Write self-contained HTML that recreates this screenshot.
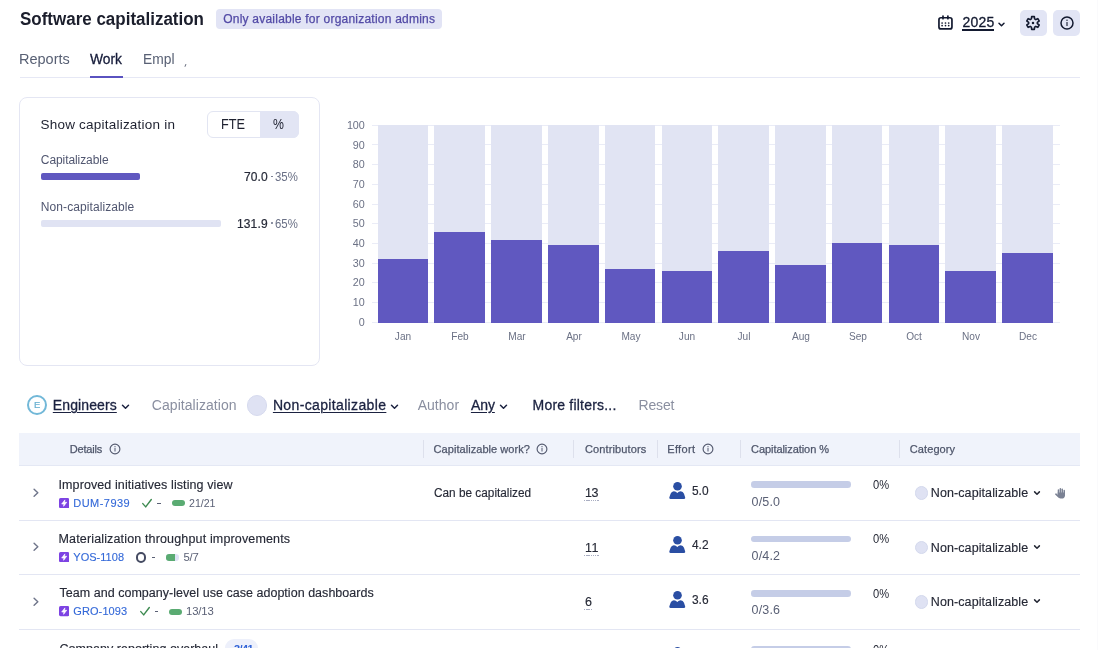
<!DOCTYPE html>
<html><head><meta charset="utf-8"><style>
html,body{margin:0;padding:0;background:#fff;width:1100px;height:650px;overflow:hidden;position:relative}
.wrap{position:absolute;left:0;top:0;width:1100px;height:650px;will-change:transform}
body{font-family:"Liberation Sans", sans-serif}
.t{position:absolute;white-space:nowrap;line-height:1}
.r{position:absolute}
</style></head><body><div class="wrap">
<div class="t " style="left:20.00px;top:10.00px;font-size:18px;color:#1b1e2c;font-weight:700;letter-spacing:0px;;transform:scaleX(0.9431);transform-origin:0 0">Software capitalization</div>
<div class="r" style="left:216.00px;top:9.00px;width:226.00px;height:20.00px;background:#e2e4f5;border-radius:4px"></div>
<div class="t " style="left:223.20px;top:13.20px;font-size:12px;color:#524aa6;font-weight:400;letter-spacing:0.226px;-webkit-text-stroke:0.25px #524aa6;">Only available for organization admins</div>
<svg class="r" style="left:937px;top:14px" width="17" height="17" viewBox="0 0 17 17">
<rect x="1.95" y="3.75" width="13" height="11.2" rx="2" fill="none" stroke="#131a30" stroke-width="1.7"/>
<rect x="5.15" y="1.2" width="1.7" height="4.4" rx=".85" fill="#131a30"/><rect x="10.05" y="1.2" width="1.7" height="4.4" rx=".85" fill="#131a30"/>
<g fill="#131a30"><circle cx="5.1" cy="9" r=".85"/><circle cx="8.5" cy="9" r=".85"/><circle cx="11.7" cy="9" r=".85"/>
<circle cx="5.1" cy="11.6" r=".85"/><circle cx="8.5" cy="11.6" r=".85"/><circle cx="11.7" cy="11.6" r=".85"/></g></svg>
<div class="t " style="left:962.40px;top:15.00px;font-size:14px;color:#131a30;font-weight:400;letter-spacing:0.214px;-webkit-text-stroke:0.3px #131a30;">2025</div>
<div class="r" style="left:962.40px;top:29.30px;width:32.00px;height:1.80px;background:#131a30;"></div>
<svg class="r" style="left:997px;top:21px" width="9" height="7" viewBox="0 0 9 7"><path d="M2 2.2 L4.5 4.7 L7 2.2" fill="none" stroke="#131a30" stroke-width="1.5" stroke-linecap="round" stroke-linejoin="round"/></svg>
<div class="r" style="left:1020.00px;top:9.50px;width:26.50px;height:26.40px;background:#e2e5f5;border-radius:5px"></div>
<div class="r" style="left:1053.20px;top:9.50px;width:26.50px;height:26.40px;background:#e2e5f5;border-radius:5px"></div>
<svg class="r" style="left:1025.4px;top:14.6px" width="16" height="16" viewBox="0 0 16 16"><path fill="none" stroke="#131a30" stroke-width="1.6" stroke-linejoin="round" d="M6.65 1.64 L9.35 1.64 L9.58 3.89 L10.77 4.58 L12.83 3.65 L14.18 5.99 L12.35 7.31 L12.35 8.69 L14.18 10.01 L12.83 12.35 L10.77 11.42 L9.58 12.11 L9.35 14.36 L6.65 14.36 L6.42 12.11 L5.23 11.42 L3.17 12.35 L1.82 10.01 L3.65 8.69 L3.65 7.31 L1.82 5.99 L3.17 3.65 L5.23 4.58 L6.42 3.89 Z"/><circle cx="8" cy="8" r="1.25" fill="#131a30"/></svg>
<svg class="r" style="left:1058.6px;top:14.6px" width="16" height="16" viewBox="0 0 16 16"><circle cx="8" cy="8" r="6" fill="none" stroke="#131a30" stroke-width="1.5"/><rect x="7.45" y="7.1" width="1.1" height="4" rx=".4" fill="#131a30"/><circle cx="8" cy="5.2" r=".7" fill="#131a30"/></svg>
<div class="t " style="left:19.00px;top:52.10px;font-size:14.5px;color:#586074;font-weight:400;letter-spacing:-0.004px;">Reports</div>
<div class="t " style="left:89.90px;top:52.10px;font-size:14.5px;color:#161c3a;font-weight:400;letter-spacing:0px;-webkit-text-stroke:0.3px #161c3a;;transform:scaleX(0.9529);transform-origin:0 0">Work</div>
<div class="t " style="left:142.65px;top:52.10px;font-size:14.5px;color:#586074;font-weight:400;letter-spacing:0px;;transform:scaleX(0.9524);transform-origin:0 0">Empl</div>
<div class="r" style="left:184.60px;top:64.20px;width:1.10px;height:2.60px;background:#6a7080;border-radius:.5px;transform:rotate(25deg)"></div>
<div class="r" style="left:20.00px;top:77.00px;width:1060.00px;height:1.00px;background:#e6e8f5;"></div>
<div class="r" style="left:89.90px;top:76.00px;width:33.10px;height:2.40px;background:#5a52c0;"></div>
<div class="r" style="left:19.00px;top:97.00px;width:301.00px;height:269.00px;background:#fff;border:1px solid #e4e6f3;border-radius:8px;box-sizing:border-box"></div>
<div class="t " style="left:40.50px;top:117.70px;font-size:13.5px;color:#1e2130;font-weight:400;letter-spacing:0.218px;">Show capitalization in</div>
<div class="r" style="left:206.50px;top:111.20px;width:92.50px;height:26.50px;background:#fff;border:1px solid #e2e5f2;border-radius:6px;box-sizing:border-box"></div>
<div class="r" style="left:259.50px;top:111.20px;width:39.50px;height:26.50px;background:#e2e5f4;border-radius:0 6px 6px 0"></div>
<div class="t " style="left:220.62px;top:117.20px;font-size:14.5px;color:#1e2130;font-weight:400;letter-spacing:0px;;transform:scaleX(0.8797);transform-origin:0 0">FTE</div>
<div class="t " style="left:273.00px;top:117.20px;font-size:14.5px;color:#1e2130;font-weight:400;letter-spacing:0px;;transform:scaleX(0.8462);transform-origin:0 0">%</div>
<div class="t " style="left:40.80px;top:154.00px;font-size:12px;color:#505670;font-weight:400;letter-spacing:-0.078px;">Capitalizable</div>
<div class="r" style="left:40.80px;top:172.50px;width:99.20px;height:7.50px;background:#6058c0;border-radius:2px"></div>
<div class="t " style="left:244.00px;top:170.60px;font-size:12px;color:#262a38;font-weight:400;letter-spacing:0.073px;-webkit-text-stroke:0.2px #262a38;">70.0</div>
<div class="r" style="left:270.90px;top:175.70px;width:1.80px;height:1.80px;background:#6a7086;border-radius:50%"></div>
<div class="t " style="left:275.30px;top:170.60px;font-size:12px;color:#6a7086;font-weight:400;letter-spacing:0px;;transform:scaleX(0.9488);transform-origin:0 0">35%</div>
<div class="t " style="left:40.80px;top:200.70px;font-size:12px;color:#505670;font-weight:400;letter-spacing:0.089px;">Non-capitalizable</div>
<div class="r" style="left:40.80px;top:219.60px;width:180.40px;height:7.20px;background:#e0e3f3;border-radius:2px"></div>
<div class="t " style="left:237.00px;top:217.50px;font-size:12px;color:#262a38;font-weight:400;letter-spacing:0.136px;-webkit-text-stroke:0.2px #262a38;">131.9</div>
<div class="r" style="left:270.90px;top:222.30px;width:1.80px;height:1.80px;background:#6a7086;border-radius:50%"></div>
<div class="t " style="left:275.30px;top:217.50px;font-size:12px;color:#6a7086;font-weight:400;letter-spacing:0px;;transform:scaleX(0.9488);transform-origin:0 0">65%</div>
<div class="r" style="left:371.80px;top:321.80px;width:688.20px;height:1.00px;background:#eaecf7;"></div>
<div class="t" style="right:735.20px;top:316.90px;font-size:10.75px;color:#6b7185">0</div>
<div class="r" style="left:371.80px;top:302.09px;width:688.20px;height:1.00px;background:#eaecf7;"></div>
<div class="t" style="right:735.20px;top:297.19px;font-size:10.75px;color:#6b7185">10</div>
<div class="r" style="left:371.80px;top:282.38px;width:688.20px;height:1.00px;background:#eaecf7;"></div>
<div class="t" style="right:735.20px;top:277.48px;font-size:10.75px;color:#6b7185">20</div>
<div class="r" style="left:371.80px;top:262.67px;width:688.20px;height:1.00px;background:#eaecf7;"></div>
<div class="t" style="right:735.20px;top:257.77px;font-size:10.75px;color:#6b7185">30</div>
<div class="r" style="left:371.80px;top:242.96px;width:688.20px;height:1.00px;background:#eaecf7;"></div>
<div class="t" style="right:735.20px;top:238.06px;font-size:10.75px;color:#6b7185">40</div>
<div class="r" style="left:371.80px;top:223.25px;width:688.20px;height:1.00px;background:#eaecf7;"></div>
<div class="t" style="right:735.20px;top:218.35px;font-size:10.75px;color:#6b7185">50</div>
<div class="r" style="left:371.80px;top:203.54px;width:688.20px;height:1.00px;background:#eaecf7;"></div>
<div class="t" style="right:735.20px;top:198.64px;font-size:10.75px;color:#6b7185">60</div>
<div class="r" style="left:371.80px;top:183.83px;width:688.20px;height:1.00px;background:#eaecf7;"></div>
<div class="t" style="right:735.20px;top:178.93px;font-size:10.75px;color:#6b7185">70</div>
<div class="r" style="left:371.80px;top:164.12px;width:688.20px;height:1.00px;background:#eaecf7;"></div>
<div class="t" style="right:735.20px;top:159.22px;font-size:10.75px;color:#6b7185">80</div>
<div class="r" style="left:371.80px;top:144.41px;width:688.20px;height:1.00px;background:#eaecf7;"></div>
<div class="t" style="right:735.20px;top:139.51px;font-size:10.75px;color:#6b7185">90</div>
<div class="r" style="left:371.80px;top:124.70px;width:688.20px;height:1.00px;background:#eaecf7;"></div>
<div class="t" style="right:735.20px;top:119.80px;font-size:10.75px;color:#6b7185">100</div>
<div class="r" style="left:377.70px;top:125.20px;width:50.50px;height:197.60px;background:#e1e4f3;"></div>
<div class="r" style="left:377.70px;top:259.23px;width:50.50px;height:63.57px;background:#6058c0;"></div>
<div class="t" style="left:373.45px;width:60px;text-align:center;top:330.80px;font-size:10.75px;color:#6b7185;transform:scaleX(0.94)">Jan</div>
<div class="r" style="left:434.47px;top:125.20px;width:50.50px;height:197.60px;background:#e1e4f3;"></div>
<div class="r" style="left:434.47px;top:231.63px;width:50.50px;height:91.17px;background:#6058c0;"></div>
<div class="t" style="left:430.22px;width:60px;text-align:center;top:330.80px;font-size:10.75px;color:#6b7185;transform:scaleX(0.94)">Feb</div>
<div class="r" style="left:491.24px;top:125.20px;width:50.50px;height:197.60px;background:#e1e4f3;"></div>
<div class="r" style="left:491.24px;top:239.52px;width:50.50px;height:83.28px;background:#6058c0;"></div>
<div class="t" style="left:486.99px;width:60px;text-align:center;top:330.80px;font-size:10.75px;color:#6b7185;transform:scaleX(0.94)">Mar</div>
<div class="r" style="left:548.01px;top:125.20px;width:50.50px;height:197.60px;background:#e1e4f3;"></div>
<div class="r" style="left:548.01px;top:245.43px;width:50.50px;height:77.37px;background:#6058c0;"></div>
<div class="t" style="left:543.76px;width:60px;text-align:center;top:330.80px;font-size:10.75px;color:#6b7185;transform:scaleX(0.94)">Apr</div>
<div class="r" style="left:604.78px;top:125.20px;width:50.50px;height:197.60px;background:#e1e4f3;"></div>
<div class="r" style="left:604.78px;top:269.08px;width:50.50px;height:53.72px;background:#6058c0;"></div>
<div class="t" style="left:600.53px;width:60px;text-align:center;top:330.80px;font-size:10.75px;color:#6b7185;transform:scaleX(0.94)">May</div>
<div class="r" style="left:661.55px;top:125.20px;width:50.50px;height:197.60px;background:#e1e4f3;"></div>
<div class="r" style="left:661.55px;top:271.05px;width:50.50px;height:51.75px;background:#6058c0;"></div>
<div class="t" style="left:657.30px;width:60px;text-align:center;top:330.80px;font-size:10.75px;color:#6b7185;transform:scaleX(0.94)">Jun</div>
<div class="r" style="left:718.32px;top:125.20px;width:50.50px;height:197.60px;background:#e1e4f3;"></div>
<div class="r" style="left:718.32px;top:251.34px;width:50.50px;height:71.46px;background:#6058c0;"></div>
<div class="t" style="left:714.07px;width:60px;text-align:center;top:330.80px;font-size:10.75px;color:#6b7185;transform:scaleX(0.94)">Jul</div>
<div class="r" style="left:775.09px;top:125.20px;width:50.50px;height:197.60px;background:#e1e4f3;"></div>
<div class="r" style="left:775.09px;top:265.14px;width:50.50px;height:57.66px;background:#6058c0;"></div>
<div class="t" style="left:770.84px;width:60px;text-align:center;top:330.80px;font-size:10.75px;color:#6b7185;transform:scaleX(0.94)">Aug</div>
<div class="r" style="left:831.86px;top:125.20px;width:50.50px;height:197.60px;background:#e1e4f3;"></div>
<div class="r" style="left:831.86px;top:243.46px;width:50.50px;height:79.34px;background:#6058c0;"></div>
<div class="t" style="left:827.61px;width:60px;text-align:center;top:330.80px;font-size:10.75px;color:#6b7185;transform:scaleX(0.94)">Sep</div>
<div class="r" style="left:888.63px;top:125.20px;width:50.50px;height:197.60px;background:#e1e4f3;"></div>
<div class="r" style="left:888.63px;top:245.43px;width:50.50px;height:77.37px;background:#6058c0;"></div>
<div class="t" style="left:884.38px;width:60px;text-align:center;top:330.80px;font-size:10.75px;color:#6b7185;transform:scaleX(0.94)">Oct</div>
<div class="r" style="left:945.40px;top:125.20px;width:50.50px;height:197.60px;background:#e1e4f3;"></div>
<div class="r" style="left:945.40px;top:271.05px;width:50.50px;height:51.75px;background:#6058c0;"></div>
<div class="t" style="left:941.15px;width:60px;text-align:center;top:330.80px;font-size:10.75px;color:#6b7185;transform:scaleX(0.94)">Nov</div>
<div class="r" style="left:1002.17px;top:125.20px;width:50.50px;height:197.60px;background:#e1e4f3;"></div>
<div class="r" style="left:1002.17px;top:253.31px;width:50.50px;height:69.48px;background:#6058c0;"></div>
<div class="t" style="left:997.92px;width:60px;text-align:center;top:330.80px;font-size:10.75px;color:#6b7185;transform:scaleX(0.94)">Dec</div>
<div class="r" style="left:26.8px;top:395.3px;width:19.8px;height:19.8px;border:2px solid #72b8d8;border-radius:50%;box-sizing:border-box"></div>
<div class="t " style="left:33.90px;top:400.40px;font-size:9.5px;color:#68b0d0;font-weight:400;letter-spacing:0px;-webkit-text-stroke:0.2px #68b0d0;">E</div>
<div class="t " style="left:52.80px;top:397.70px;font-size:14px;color:#1b2240;font-weight:400;letter-spacing:0.107px;-webkit-text-stroke:0.3px #1b2240;text-decoration:underline;text-decoration-thickness:1.4px;text-underline-offset:1.6px">Engineers</div>
<svg class="r" style="left:120.8px;top:403px" width="9" height="7" viewBox="0 0 9 7"><path d="M1.5 2.2 L4.5 5.2 L7.5 2.2" fill="none" stroke="#1b2240" stroke-width="1.5" stroke-linecap="round" stroke-linejoin="round"/></svg>
<div class="t " style="left:151.80px;top:397.70px;font-size:14px;color:#8a8fa0;font-weight:400;letter-spacing:0.057px;">Capitalization</div>
<div class="r" style="left:246.9px;top:395.3px;width:20.3px;height:20.3px;background:#dfe2f3;border:1px solid #d6daee;border-radius:50%;box-sizing:border-box"></div>
<div class="t " style="left:272.90px;top:397.70px;font-size:14px;color:#1b2240;font-weight:400;letter-spacing:0.356px;-webkit-text-stroke:0.3px #1b2240;text-decoration:underline;text-decoration-thickness:1.4px;text-underline-offset:1.6px">Non-capitalizable</div>
<svg class="r" style="left:390.3px;top:403px" width="9" height="7" viewBox="0 0 9 7"><path d="M1.5 2.2 L4.5 5.2 L7.5 2.2" fill="none" stroke="#1b2240" stroke-width="1.5" stroke-linecap="round" stroke-linejoin="round"/></svg>
<div class="t " style="left:417.70px;top:397.70px;font-size:14px;color:#8a8fa0;font-weight:400;letter-spacing:0.023px;">Author</div>
<div class="t " style="left:470.90px;top:397.70px;font-size:14px;color:#1b2240;font-weight:400;letter-spacing:-0.062px;-webkit-text-stroke:0.3px #1b2240;text-decoration:underline;text-decoration-thickness:1.4px;text-underline-offset:1.6px">Any</div>
<svg class="r" style="left:499px;top:403px" width="9" height="7" viewBox="0 0 9 7"><path d="M1.5 2.2 L4.5 5.2 L7.5 2.2" fill="none" stroke="#1b2240" stroke-width="1.5" stroke-linecap="round" stroke-linejoin="round"/></svg>
<div class="t " style="left:532.60px;top:397.70px;font-size:14px;color:#1b2240;font-weight:400;letter-spacing:0.199px;-webkit-text-stroke:0.3px #1b2240;">More filters...</div>
<div class="t " style="left:638.40px;top:397.70px;font-size:14px;color:#8a8fa0;font-weight:400;letter-spacing:-0.121px;">Reset</div>
<div class="r" style="left:19.20px;top:433.00px;width:1060.60px;height:33.00px;background:#f0f3fb;border-bottom:1px solid #e4e8f4;box-sizing:border-box"></div>
<div class="t " style="left:69.70px;top:444.40px;font-size:11px;color:#4f566b;font-weight:400;letter-spacing:-0.171px;-webkit-text-stroke:0.25px #4f566b;">Details</div>
<svg class="r" style="left:109.20px;top:442.80px" width="12" height="12" viewBox="0 0 12 12"><circle cx="6" cy="6" r="4.9" fill="none" stroke="#555b70" stroke-width="1.15"/><rect x="5.5" y="5.1" width="1" height="3.5" rx=".3" fill="#555b70"/><circle cx="6" cy="3.7" r=".62" fill="#555b70"/></svg>
<div class="r" style="left:423.00px;top:440.00px;width:1.00px;height:18.40px;background:#dde0ec;"></div>
<div class="r" style="left:573.40px;top:440.00px;width:1.00px;height:18.40px;background:#dde0ec;"></div>
<div class="r" style="left:657.00px;top:440.00px;width:1.00px;height:18.40px;background:#dde0ec;"></div>
<div class="r" style="left:740.00px;top:440.00px;width:1.00px;height:18.40px;background:#dde0ec;"></div>
<div class="r" style="left:898.80px;top:440.00px;width:1.00px;height:18.40px;background:#dde0ec;"></div>
<div class="t " style="left:433.60px;top:444.40px;font-size:11px;color:#4f566b;font-weight:400;letter-spacing:0.052px;-webkit-text-stroke:0.25px #4f566b;">Capitalizable work?</div>
<svg class="r" style="left:536.00px;top:442.80px" width="12" height="12" viewBox="0 0 12 12"><circle cx="6" cy="6" r="4.9" fill="none" stroke="#555b70" stroke-width="1.15"/><rect x="5.5" y="5.1" width="1" height="3.5" rx=".3" fill="#555b70"/><circle cx="6" cy="3.7" r=".62" fill="#555b70"/></svg>
<div class="t " style="left:585.00px;top:444.40px;font-size:11px;color:#4f566b;font-weight:400;letter-spacing:0.126px;-webkit-text-stroke:0.25px #4f566b;">Contributors</div>
<div class="t " style="left:667.20px;top:444.40px;font-size:11px;color:#4f566b;font-weight:400;letter-spacing:0.354px;-webkit-text-stroke:0.25px #4f566b;">Effort</div>
<svg class="r" style="left:701.70px;top:442.80px" width="12" height="12" viewBox="0 0 12 12"><circle cx="6" cy="6" r="4.9" fill="none" stroke="#555b70" stroke-width="1.15"/><rect x="5.5" y="5.1" width="1" height="3.5" rx=".3" fill="#555b70"/><circle cx="6" cy="3.7" r=".62" fill="#555b70"/></svg>
<div class="t " style="left:751.00px;top:444.40px;font-size:11px;color:#4f566b;font-weight:400;letter-spacing:-0.06px;-webkit-text-stroke:0.25px #4f566b;">Capitalization %</div>
<div class="t " style="left:909.80px;top:444.40px;font-size:11px;color:#4f566b;font-weight:400;letter-spacing:0.095px;-webkit-text-stroke:0.25px #4f566b;">Category</div>
<div class="r" style="left:0;top:466px;width:1100px;height:182px;overflow:hidden">
<div class="r" style="left:19.20px;top:53.90px;width:1060.60px;height:1.00px;background:#e3e6f3;"></div>
<svg class="r" style="left:30px;top:19.00px" width="12" height="15" viewBox="0 0 12 15"><path d="M4.1 4.3 L7.8 7.8 L4.1 11.2" fill="none" stroke="#6f758a" stroke-width="1.45" stroke-linecap="round" stroke-linejoin="round"/></svg>
<div class="t " style="left:58.50px;top:12.60px;font-size:12.5px;color:#262936;font-weight:400;letter-spacing:0.098px;-webkit-text-stroke:0.15px #262936;">Improved initiatives listing view</div>
<svg class="r" style="left:59.1px;top:31.60px" width="10.4" height="10.2" viewBox="0 0 10.4 10.2"><rect width="10.4" height="10.2" rx="1.6" fill="#7d43e3"/><path d="M5.9 1.9 L2.7 6.0 H5.0 L4.6 8.3 L7.7 4.3 H5.4 Z" fill="#fff" stroke="#fff" stroke-width=".7" stroke-linejoin="round"/></svg>
<div class="t " style="left:73.30px;top:31.50px;font-size:11px;color:#3368d8;font-weight:400;letter-spacing:0.462px;-webkit-text-stroke:0.12px #3368d8;">DUM-7939</div>
<svg class="r" style="left:141.90px;top:31.50px" width="10.5" height="10.5" viewBox="0 0 10.5 10.5"><path d="M0.8 5.6 L3.7 8.9 L9.3 1.5" fill="none" stroke="#3d8a50" stroke-width="1.4" stroke-linecap="round" stroke-linejoin="round"/></svg>
<div class="r" style="left:157.40px;top:37.00px;width:3.40px;height:1.20px;background:#5a6075;"></div>
<div class="r" style="left:171.70px;top:34.00px;width:13.2px;height:6.4px;border-radius:3.2px;background:#dde2f5;overflow:hidden"><div style="width:13.20px;height:100%;background:#5aab72"></div></div>
<div class="t " style="left:188.90px;top:31.50px;font-size:11.3px;color:#5a6075;font-weight:400;letter-spacing:0px;;transform:scaleX(0.9361);transform-origin:0 0">21/21</div>
<div class="t " style="left:434.00px;top:21.00px;font-size:12.5px;color:#262936;font-weight:400;letter-spacing:0px;-webkit-text-stroke:0.15px #262936;;transform:scaleX(0.9447);transform-origin:0 0">Can be capitalized</div>
<div class="t " style="left:585.00px;top:21.10px;font-size:12.5px;color:#262936;font-weight:400;letter-spacing:-0.552px;-webkit-text-stroke:0.15px #262936;">13</div>
<div class="r" style="left:583.60px;top:34.00px;width:15.60px;height:1.00px;background:repeating-linear-gradient(90deg,#a9aec2 0 1.5px,transparent 1.5px 2.2px);"></div>
<svg class="r" style="left:669px;top:16.00px" width="17" height="17" viewBox="0 0 17 17"><circle cx="8.5" cy="4.3" r="4.3" fill="#2a4ea3"/><path d="M1.4 16.9 Q0 16.9 0.3 15.5 L1.6 11.8 Q2.5 9.2 4.9 9.2 Q6.9 9.3 8.3 10.9 Q9.7 9.3 11.7 9.2 Q14.1 9.2 15 11.8 L16.2 15.5 Q16.5 16.9 15.1 16.9 Z" fill="#2a4ea3"/></svg>
<div class="t " style="left:691.70px;top:19.00px;font-size:12.5px;color:#262936;font-weight:400;letter-spacing:0px;-webkit-text-stroke:0.15px #262936;;transform:scaleX(0.9527);transform-origin:0 0">5.0</div>
<div class="r" style="left:750.90px;top:15.20px;width:100.40px;height:6.50px;background:#c5cde7;border-radius:3.25px"></div>
<div class="t " style="left:873.10px;top:12.90px;font-size:12.5px;color:#262936;font-weight:400;letter-spacing:0px;;transform:scaleX(0.8913);transform-origin:0 0">0%</div>
<div class="t " style="left:751.60px;top:29.60px;font-size:12.5px;color:#5a6075;font-weight:400;letter-spacing:0.138px;">0/5.0</div>
<div class="r" style="left:914.5px;top:20.20px;width:13.8px;height:13.8px;background:#dfe2f3;border:1px solid #d3d8ec;border-radius:50%;box-sizing:border-box"></div>
<div class="t " style="left:930.80px;top:21.20px;font-size:12.5px;color:#262936;font-weight:400;letter-spacing:0.092px;-webkit-text-stroke:0.15px #262936;">Non-capitalizable</div>
<svg class="r" style="left:1032px;top:22.50px" width="10" height="8" viewBox="0 0 10 8"><path d="M2.6 2.9 L5 5.3 L7.4 2.9" fill="none" stroke="#262936" stroke-width="1.5" stroke-linecap="round" stroke-linejoin="round"/></svg>
<svg class="r" style="left:1054.5px;top:22.00px" width="11" height="11" viewBox="0 0 11 11"><g fill="#7b8294"><rect x="2.7" y="1.3" width="1.5" height="6" rx=".75"/><rect x="4.6" y="0.1" width="1.5" height="6" rx=".75"/><rect x="6.5" y="0.6" width="1.5" height="6" rx=".75"/><rect x="8.5" y="1.8" width="1.5" height="6" rx=".75"/><path d="M2.7 4.5 H10 V7.2 C10 9.3 8.7 10.6 6.6 10.6 C5 10.6 4 10 3.2 8.9 L2.7 8.2 Z"/></g><path d="M0.9 6.2 L3.6 8.6" stroke="#7b8294" stroke-width="1.6" stroke-linecap="round"/></svg>
<div class="r" style="left:19.20px;top:108.30px;width:1060.60px;height:1.00px;background:#e3e6f3;"></div>
<svg class="r" style="left:30px;top:73.40px" width="12" height="15" viewBox="0 0 12 15"><path d="M4.1 4.3 L7.8 7.8 L4.1 11.2" fill="none" stroke="#6f758a" stroke-width="1.45" stroke-linecap="round" stroke-linejoin="round"/></svg>
<div class="t " style="left:58.50px;top:67.00px;font-size:12.5px;color:#262936;font-weight:400;letter-spacing:0.151px;-webkit-text-stroke:0.15px #262936;">Materialization throughput improvements</div>
<svg class="r" style="left:59.1px;top:86.00px" width="10.4" height="10.2" viewBox="0 0 10.4 10.2"><rect width="10.4" height="10.2" rx="1.6" fill="#7d43e3"/><path d="M5.9 1.9 L2.7 6.0 H5.0 L4.6 8.3 L7.7 4.3 H5.4 Z" fill="#fff" stroke="#fff" stroke-width=".7" stroke-linejoin="round"/></svg>
<div class="t " style="left:73.30px;top:85.90px;font-size:11px;color:#3368d8;font-weight:400;letter-spacing:0.024px;-webkit-text-stroke:0.12px #3368d8;">YOS-1108</div>
<div class="r" style="left:135.8px;top:86.40px;width:10.2px;height:10.2px;border:2px solid #454b62;border-radius:50%;box-sizing:border-box"></div>
<div class="r" style="left:151.80px;top:91.00px;width:3.40px;height:1.20px;background:#5a6075;"></div>
<div class="r" style="left:165.80px;top:88.40px;width:13.2px;height:6.4px;border-radius:3.2px;background:#dde2f5;overflow:hidden"><div style="width:9.43px;height:100%;background:#5aab72"></div></div>
<div class="t " style="left:183.50px;top:85.90px;font-size:11.3px;color:#5a6075;font-weight:400;letter-spacing:-0.211px;">5/7</div>
<div class="t " style="left:585.00px;top:75.50px;font-size:12.5px;color:#262936;font-weight:400;letter-spacing:0.376px;-webkit-text-stroke:0.15px #262936;">11</div>
<div class="r" style="left:583.60px;top:89.00px;width:15.60px;height:1.00px;background:repeating-linear-gradient(90deg,#a9aec2 0 1.5px,transparent 1.5px 2.2px);"></div>
<svg class="r" style="left:669px;top:70.40px" width="17" height="17" viewBox="0 0 17 17"><circle cx="8.5" cy="4.3" r="4.3" fill="#2a4ea3"/><path d="M1.4 16.9 Q0 16.9 0.3 15.5 L1.6 11.8 Q2.5 9.2 4.9 9.2 Q6.9 9.3 8.3 10.9 Q9.7 9.3 11.7 9.2 Q14.1 9.2 15 11.8 L16.2 15.5 Q16.5 16.9 15.1 16.9 Z" fill="#2a4ea3"/></svg>
<div class="t " style="left:691.70px;top:73.40px;font-size:12.5px;color:#262936;font-weight:400;letter-spacing:0px;-webkit-text-stroke:0.15px #262936;;transform:scaleX(0.9527);transform-origin:0 0">4.2</div>
<div class="r" style="left:750.90px;top:69.60px;width:100.40px;height:6.50px;background:#c5cde7;border-radius:3.25px"></div>
<div class="t " style="left:873.10px;top:67.30px;font-size:12.5px;color:#262936;font-weight:400;letter-spacing:0px;;transform:scaleX(0.8913);transform-origin:0 0">0%</div>
<div class="t " style="left:751.60px;top:84.00px;font-size:12.5px;color:#5a6075;font-weight:400;letter-spacing:0.138px;">0/4.2</div>
<div class="r" style="left:914.5px;top:74.60px;width:13.8px;height:13.8px;background:#dfe2f3;border:1px solid #d3d8ec;border-radius:50%;box-sizing:border-box"></div>
<div class="t " style="left:930.80px;top:75.60px;font-size:12.5px;color:#262936;font-weight:400;letter-spacing:0.092px;-webkit-text-stroke:0.15px #262936;">Non-capitalizable</div>
<svg class="r" style="left:1032px;top:76.90px" width="10" height="8" viewBox="0 0 10 8"><path d="M2.6 2.9 L5 5.3 L7.4 2.9" fill="none" stroke="#262936" stroke-width="1.5" stroke-linecap="round" stroke-linejoin="round"/></svg>
<div class="r" style="left:19.20px;top:162.70px;width:1060.60px;height:1.00px;background:#e3e6f3;"></div>
<svg class="r" style="left:30px;top:127.80px" width="12" height="15" viewBox="0 0 12 15"><path d="M4.1 4.3 L7.8 7.8 L4.1 11.2" fill="none" stroke="#6f758a" stroke-width="1.45" stroke-linecap="round" stroke-linejoin="round"/></svg>
<div class="t " style="left:59.50px;top:121.40px;font-size:12.5px;color:#262936;font-weight:400;letter-spacing:0.031px;-webkit-text-stroke:0.15px #262936;">Team and company-level use case adoption dashboards</div>
<svg class="r" style="left:59.1px;top:140.40px" width="10.4" height="10.2" viewBox="0 0 10.4 10.2"><rect width="10.4" height="10.2" rx="1.6" fill="#7d43e3"/><path d="M5.9 1.9 L2.7 6.0 H5.0 L4.6 8.3 L7.7 4.3 H5.4 Z" fill="#fff" stroke="#fff" stroke-width=".7" stroke-linejoin="round"/></svg>
<div class="t " style="left:73.30px;top:140.30px;font-size:11px;color:#3368d8;font-weight:400;letter-spacing:0.09px;-webkit-text-stroke:0.12px #3368d8;">GRO-1093</div>
<svg class="r" style="left:139.50px;top:140.30px" width="10.5" height="10.5" viewBox="0 0 10.5 10.5"><path d="M0.8 5.6 L3.7 8.9 L9.3 1.5" fill="none" stroke="#3d8a50" stroke-width="1.4" stroke-linecap="round" stroke-linejoin="round"/></svg>
<div class="r" style="left:154.70px;top:145.00px;width:3.40px;height:1.20px;background:#5a6075;"></div>
<div class="r" style="left:169.00px;top:142.80px;width:13.2px;height:6.4px;border-radius:3.2px;background:#dde2f5;overflow:hidden"><div style="width:13.20px;height:100%;background:#5aab72"></div></div>
<div class="t " style="left:186.00px;top:140.30px;font-size:11.3px;color:#5a6075;font-weight:400;letter-spacing:-0.147px;">13/13</div>
<div class="t " style="left:585.00px;top:129.90px;font-size:12.5px;color:#262936;font-weight:400;letter-spacing:0px;-webkit-text-stroke:0.15px #262936;">6</div>
<div class="r" style="left:583.60px;top:143.00px;width:8.30px;height:1.00px;background:repeating-linear-gradient(90deg,#a9aec2 0 1.5px,transparent 1.5px 2.2px);"></div>
<svg class="r" style="left:669px;top:124.80px" width="17" height="17" viewBox="0 0 17 17"><circle cx="8.5" cy="4.3" r="4.3" fill="#2a4ea3"/><path d="M1.4 16.9 Q0 16.9 0.3 15.5 L1.6 11.8 Q2.5 9.2 4.9 9.2 Q6.9 9.3 8.3 10.9 Q9.7 9.3 11.7 9.2 Q14.1 9.2 15 11.8 L16.2 15.5 Q16.5 16.9 15.1 16.9 Z" fill="#2a4ea3"/></svg>
<div class="t " style="left:691.70px;top:127.80px;font-size:12.5px;color:#262936;font-weight:400;letter-spacing:0px;-webkit-text-stroke:0.15px #262936;;transform:scaleX(0.9527);transform-origin:0 0">3.6</div>
<div class="r" style="left:750.90px;top:124.00px;width:100.40px;height:6.50px;background:#c5cde7;border-radius:3.25px"></div>
<div class="t " style="left:873.10px;top:121.70px;font-size:12.5px;color:#262936;font-weight:400;letter-spacing:0px;;transform:scaleX(0.8913);transform-origin:0 0">0%</div>
<div class="t " style="left:751.60px;top:138.40px;font-size:12.5px;color:#5a6075;font-weight:400;letter-spacing:0.138px;">0/3.6</div>
<div class="r" style="left:914.5px;top:129.00px;width:13.8px;height:13.8px;background:#dfe2f3;border:1px solid #d3d8ec;border-radius:50%;box-sizing:border-box"></div>
<div class="t " style="left:930.80px;top:130.00px;font-size:12.5px;color:#262936;font-weight:400;letter-spacing:0.092px;-webkit-text-stroke:0.15px #262936;">Non-capitalizable</div>
<svg class="r" style="left:1032px;top:131.30px" width="10" height="8" viewBox="0 0 10 8"><path d="M2.6 2.9 L5 5.3 L7.4 2.9" fill="none" stroke="#262936" stroke-width="1.5" stroke-linecap="round" stroke-linejoin="round"/></svg>
<div class="r" style="left:19.20px;top:217.10px;width:1060.60px;height:1.00px;background:#e3e6f3;"></div>
<svg class="r" style="left:30px;top:183.70px" width="12" height="15" viewBox="0 0 12 15"><path d="M4.1 4.3 L7.8 7.8 L4.1 11.2" fill="none" stroke="#6f758a" stroke-width="1.45" stroke-linecap="round" stroke-linejoin="round"/></svg>
<div class="t " style="left:59.50px;top:177.30px;font-size:12.5px;color:#262936;font-weight:400;letter-spacing:0.034px;-webkit-text-stroke:0.15px #262936;">Company reporting overhaul</div>
<div class="r" style="left:225.3px;top:172.80px;width:32.5px;height:18px;border-radius:9px;background:#edf0fb"></div>
<div class="t " style="left:234.00px;top:177.50px;font-size:11px;color:#2f62d6;font-weight:700;letter-spacing:-0.6px;">3/41</div>
<svg class="r" style="left:669px;top:180.70px" width="17" height="17" viewBox="0 0 17 17"><circle cx="8.5" cy="4.3" r="4.3" fill="#2a4ea3"/><path d="M1.4 16.9 Q0 16.9 0.3 15.5 L1.6 11.8 Q2.5 9.2 4.9 9.2 Q6.9 9.3 8.3 10.9 Q9.7 9.3 11.7 9.2 Q14.1 9.2 15 11.8 L16.2 15.5 Q16.5 16.9 15.1 16.9 Z" fill="#2a4ea3"/></svg>
<div class="r" style="left:750.90px;top:179.90px;width:100.40px;height:6.50px;background:#c5cde7;border-radius:3.25px"></div>
<div class="t " style="left:873.10px;top:177.60px;font-size:12.5px;color:#262936;font-weight:400;letter-spacing:0px;;transform:scaleX(0.8913);transform-origin:0 0">0%</div>
</div>
<div class="r" style="left:1097.00px;top:0.00px;width:1.00px;height:650.00px;background:#fafafc;"></div>
</div></body></html>
